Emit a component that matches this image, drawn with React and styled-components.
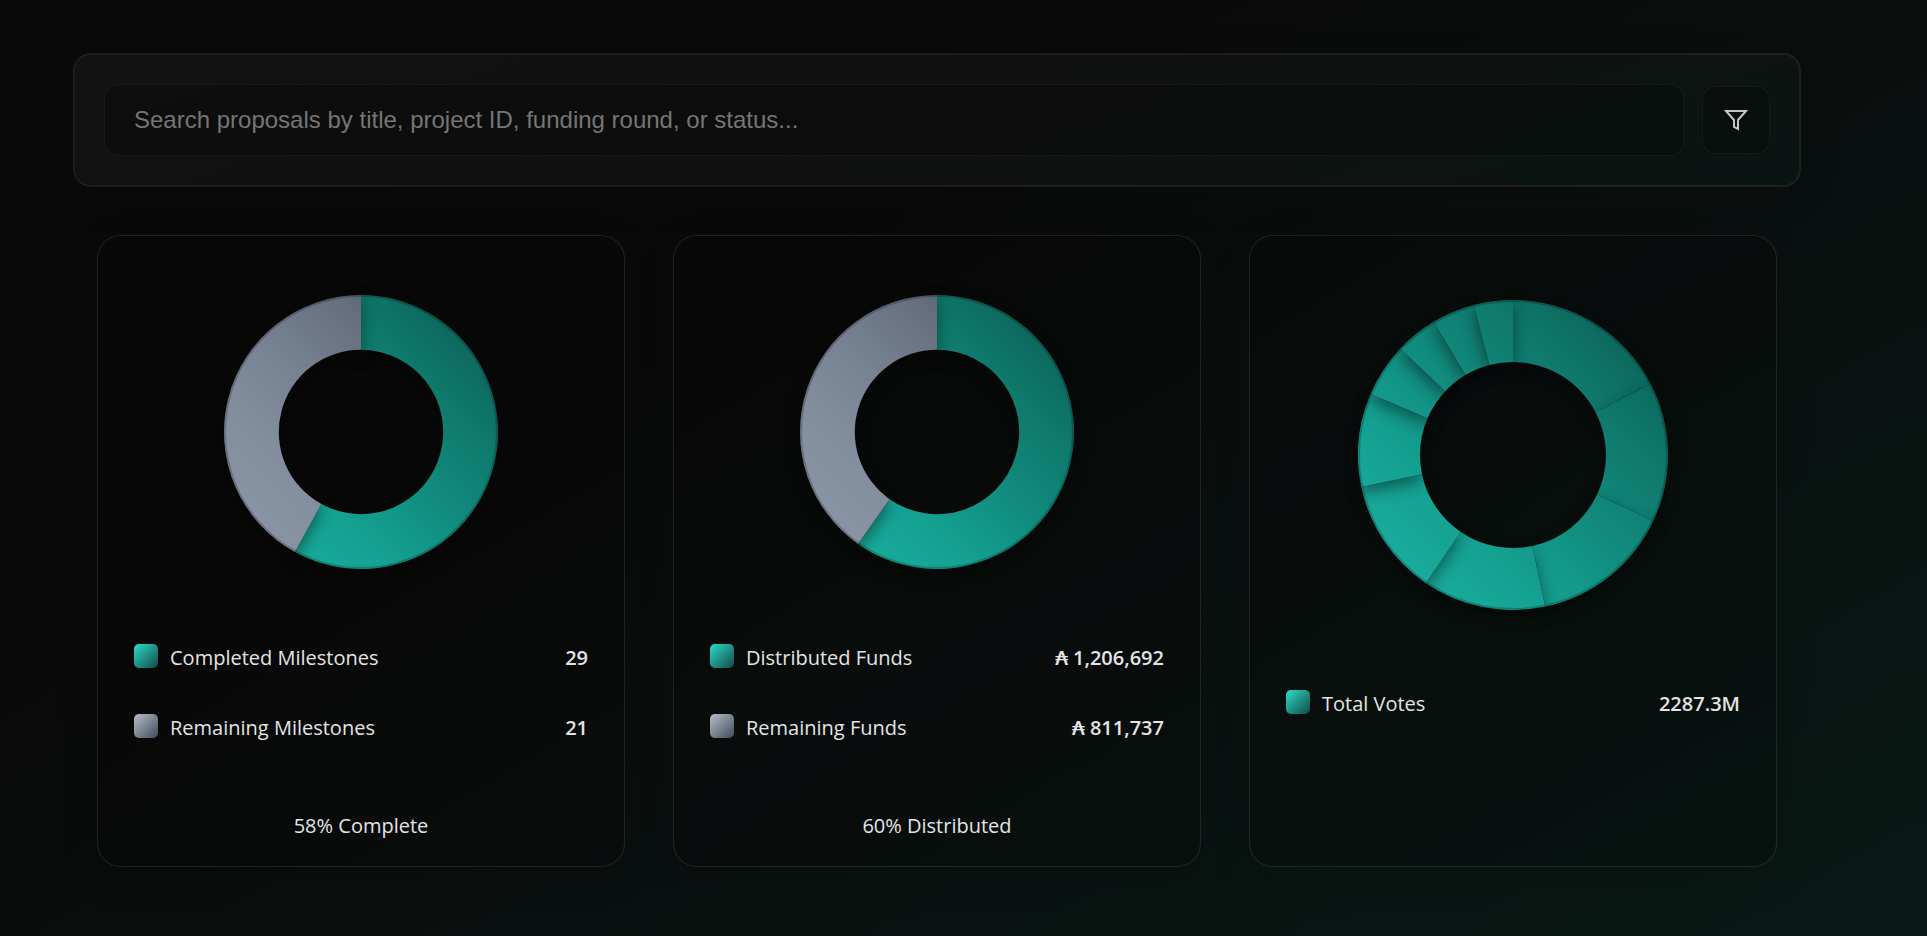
import React, { useId } from 'react';
import styled, { createGlobalStyle } from 'styled-components';

const GlobalStyle = createGlobalStyle`
  * { box-sizing: border-box; }
  body {
    margin: 0;
    background: #0a0a0a;
    color: #e4e4e4;
    font-family: "Segoe UI", "Open Sans", "Noto Sans", sans-serif;
  }
`;

const Page = styled.main`
  display: flex;
  flex-direction: column;
  gap: 48px;
  min-height: 100vh;
  padding: 53px 126px 48px 73px;
  background: linear-gradient(150deg, #0a0a0a 0%, #0a0a0a 35%, #0a100f 60%, #091814 95%);
`;

const SearchBar = styled.form`
  display: flex;
  align-items: center;
  gap: 18px;
  padding: 29px;
  border: 2px solid rgba(255, 255, 255, 0.08);
  border-radius: 18px;
  background: linear-gradient(160deg, #121212 0%, #101010 45%, #0d1311 75%, #0a1412 100%);
  background-clip: padding-box;
  box-shadow: 0 10px 38px rgba(0, 0, 0, 0.15);
`;

const SearchInput = styled.input`
  flex: 1;
  min-width: 0;
  height: 72px;
  padding: 0 29px;
  border: 1px solid rgba(255, 255, 255, 0.05);
  border-radius: 14px;
  outline: none;
  background: rgba(0, 0, 0, 0.2);
  color: #e4e4e4;
  font: 24px "Liberation Sans", Arial, sans-serif;
  &::placeholder { color: #757575; opacity: 1; }
`;

const FilterButton = styled.button`
  display: grid;
  place-items: center;
  width: 68px;
  height: 68px;
  padding: 0;
  border: 1px solid rgba(255, 255, 255, 0.05);
  border-radius: 14px;
  background: rgba(0, 0, 0, 0.24);
  color: #c4c4c4;
`;

const CardGrid = styled.section`
  display: grid;
  grid-template-columns: repeat(3, minmax(0, 1fr));
  gap: 48px;
  padding: 0 24px;
`;

const Card = styled.article`
  display: flex;
  flex-direction: column;
  align-items: center;
  min-height: 630px;
  padding: 38px 36px 28px;
  border: 1px solid rgba(255, 255, 255, 0.1);
  border-radius: 24px;
  background: rgba(0, 0, 0, 0.2);
  box-shadow: 0 10px 38px rgba(0, 0, 0, 0.15);
`;

const Chart = styled.svg`
  display: block;
  flex: none;
  width: ${(p) => p.$size}px;
  height: ${(p) => p.$size}px;
  overflow: visible;
`;

const Slice = styled.path`
  filter: drop-shadow(0 6px 8px rgba(0, 0, 0, 0.45));
`;

const Legend = styled.dl`
  display: flex;
  flex-direction: column;
  gap: 42px;
  width: 100%;
  margin: 54px 0 0;
`;

const LegendRow = styled.div`
  display: flex;
  align-items: flex-start;
  gap: 12px;
`;

const Swatch = styled.span`
  width: 24px;
  height: 24px;
  border-radius: 5px;
  background: ${(p) => (p.$tone === 'teal'
    ? 'linear-gradient(135deg, #2ddccb, #124a44)'
    : 'linear-gradient(135deg, #b8bec8, #414c5a)')};
`;

const Label = styled.dt`
  flex: 1;
  font-size: 20px;
  line-height: 28px;
`;

const Value = styled.dd`
  margin: 0;
  font-size: 20px;
  font-weight: 600;
  line-height: 28px;
`;

const Summary = styled.p`
  margin: 72px 0 0;
  font-size: 20px;
  line-height: 24px;
`;

const polar = (r, deg) => {
  const a = (deg * Math.PI) / 180;
  return `${r * Math.sin(a)} ${-r * Math.cos(a)}`;
};

const ringSlice = (r, from, to) => {
  const inner = r * 0.6;
  const large = to - from > 180 ? 1 : 0;
  return `M${polar(r, from)}A${r} ${r} 0 ${large} 1 ${polar(r, to)}L${polar(inner, to)}A${inner} ${inner} 0 ${large} 0 ${polar(inner, from)}Z`;
};

function Donut({ size, radius, slices, title }) {
  const id = useId();
  const total = slices.reduce((sum, s) => sum + s.value, 0);
  let angle = 0;
  const reach = radius * 0.75;
  return (
    <Chart $size={size} viewBox={`${-size / 2} ${-size / 2} ${size} ${size}`} role="img" aria-label={title}>
      <defs>
        <linearGradient id={`${id}teal`} gradientUnits="userSpaceOnUse" x1={-reach} y1={reach} x2={reach} y2={-reach}>
          <stop offset="0" stopColor="#1aac9d" />
          <stop offset="0.25" stopColor="#14a191" />
          <stop offset="0.5" stopColor="#118d7f" />
          <stop offset="0.77" stopColor="#0f7a6d" />
          <stop offset="1" stopColor="#0d665c" />
        </linearGradient>
        <linearGradient id={`${id}gray`} gradientUnits="userSpaceOnUse" x1={-reach} y1={reach} x2={reach} y2={-reach}>
          <stop offset="0" stopColor="#8995a4" />
          <stop offset="0.25" stopColor="#828d9d" />
          <stop offset="0.5" stopColor="#768191" />
          <stop offset="0.77" stopColor="#656f7e" />
          <stop offset="1" stopColor="#4b5563" />
        </linearGradient>
      </defs>
      {slices.map((s, i) => {
        const from = angle;
        angle += (s.value / total) * 360;
        return <Slice key={i} d={ringSlice(radius, from, angle)} fill={`url(#${id}${s.tone})`} />;
      })}
      <circle r={radius - 1} fill="none" stroke="#000" strokeOpacity="0.22" strokeWidth="2" />
    </Chart>
  );
}

const teal = (value) => ({ value, tone: 'teal' });
const gray = (value) => ({ value, tone: 'gray' });

const cards = [
  {
    title: 'Milestones', size: 316, radius: 137,
    slices: [teal(29), gray(21)],
    rows: [['teal', 'Completed Milestones', '29'], ['gray', 'Remaining Milestones', '21']],
    summary: '58% Complete',
  },
  {
    title: 'Funds', size: 316, radius: 137,
    slices: [teal(1206692), gray(811737)],
    rows: [['teal', 'Distributed Funds', '₳ 1,206,692'], ['gray', 'Remaining Funds', '₳ 811,737']],
    summary: '60% Distributed',
  },
  {
    title: 'Votes', size: 362, radius: 155,
    slices: [62.6, 52.6, 52.8, 46.2, 43.9, 35.1, 20.1, 15.9, 16.1, 14.7].map(teal),
    rows: [['teal', 'Total Votes', '2287.3M']],
  },
];

export default function App() {
  return (
    <>
      <GlobalStyle />
      <Page>
        <SearchBar role="search" onSubmit={(e) => e.preventDefault()}>
          <SearchInput
            type="text"
            aria-label="Search proposals"
            placeholder="Search proposals by title, project ID, funding round, or status..."
          />
          <FilterButton type="button" aria-label="Filter">
            <svg width="24" height="24" viewBox="0 0 24 24" fill="none" stroke="currentColor" strokeWidth="2" overflow="visible">
              <path d="M2 3H22L14 12V21L10 19V12Z" />
            </svg>
          </FilterButton>
        </SearchBar>
        <CardGrid>
          {cards.map((card) => (
            <Card key={card.title}>
              <Donut {...card} />
              <Legend>
                {card.rows.map(([tone, label, value]) => (
                  <LegendRow key={label}>
                    <Swatch $tone={tone} />
                    <Label>{label}</Label>
                    <Value>{value}</Value>
                  </LegendRow>
                ))}
              </Legend>
              {card.summary && <Summary>{card.summary}</Summary>}
            </Card>
          ))}
        </CardGrid>
      </Page>
    </>
  );
}
